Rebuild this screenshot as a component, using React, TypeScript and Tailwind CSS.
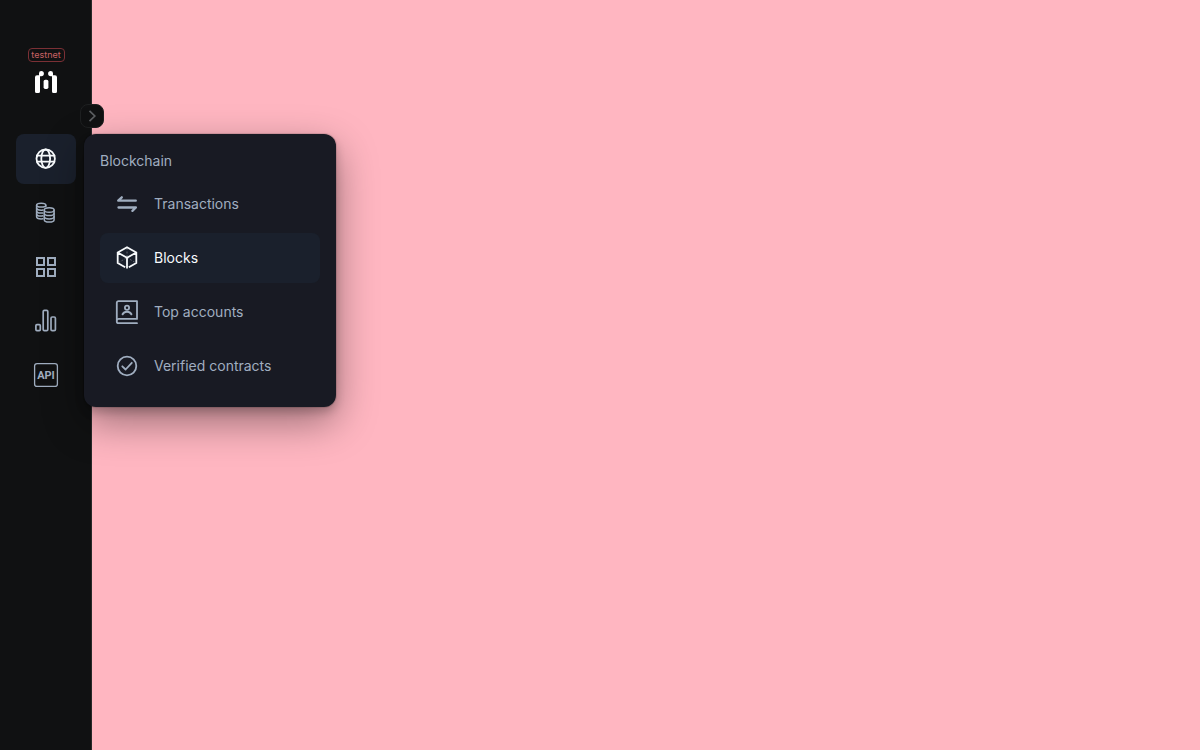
import type { ReactNode } from 'react';

function Icon({ children }: { children: ReactNode }) {
  return (
    <svg
      viewBox="0 0 30 30"
      className="size-[30px] shrink-0"
      fill="none"
      stroke="currentColor"
      strokeWidth="1.8"
      strokeLinecap="round"
      strokeLinejoin="round"
      aria-hidden="true"
    >
      {children}
    </svg>
  );
}

const GlobeIcon = () => (
  <Icon>
    <circle cx="14.7" cy="14.7" r="9.2" />
    <ellipse cx="14.7" cy="14.7" rx="4.4" ry="9.2" />
    <path d="M6 11.7h17.4M6 17.7h17.4" />
  </Icon>
);

const CoinsIcon = () => (
  <Icon>
    <g strokeWidth="1.5">
      <ellipse cx="10.2" cy="7.2" rx="4.6" ry="1.9" />
      <path d="M5.6 7.2v11.6c0 1.2 2 2.1 4.6 2.1.6 0 1.2 0 1.7-.1M14.8 7.2v1.2" />
      <path d="M5.6 10.1c0 1.1 2 2.1 4.6 2.1.6 0 1.2-.1 1.7-.2M5.6 13c0 1.1 2 2.1 4.6 2.1.6 0 1.2-.1 1.7-.2M5.6 15.9c0 1.1 2 2.1 4.6 2.1.6 0 1.2-.1 1.7-.2" />
      <ellipse cx="18.2" cy="12" rx="4.9" ry="2.3" />
      <path d="M13.3 12v9.7c0 1.3 2.2 2.4 4.9 2.4s4.9-1.1 4.9-2.4V12" />
      <path d="M13.3 15.2c0 1.3 2.2 2.4 4.9 2.4s4.9-1.1 4.9-2.4M13.3 18.5c0 1.3 2.2 2.4 4.9 2.4s4.9-1.1 4.9-2.4" />
    </g>
  </Icon>
);

const AppsIcon = () => (
  <Icon>
    <g strokeWidth="2" strokeLinejoin="miter">
      <rect x="6" y="6" width="7" height="7" />
      <rect x="17" y="6" width="7" height="7" />
      <rect x="6" y="17" width="7" height="7" />
      <rect x="17" y="17" width="7" height="7" />
    </g>
  </Icon>
);

const StatsIcon = () => (
  <Icon>
    <g strokeWidth="1.7">
      <rect x="4.9" y="18.7" width="4.4" height="5.9" rx="1" />
      <rect x="12.2" y="4.3" width="4.6" height="20.3" rx="1.2" />
      <rect x="20" y="11" width="4.4" height="13.6" rx="1.2" />
    </g>
  </Icon>
);

const ApiIcon = () => (
  <Icon>
    <rect x="3.6" y="3.6" width="22.8" height="22.8" rx="2.5" strokeWidth="1.3" />
    <text
      x="15"
      y="19"
      textAnchor="middle"
      fill="currentColor"
      stroke="none"
      className="font-['Roboto',sans-serif] text-[11px] font-bold"
    >
      API
    </text>
  </Icon>
);

const TransactionsIcon = () => (
  <Icon>
    <path strokeWidth="2.3" d="M23.8 11.7H6.2l3.6-3.4M6.5 18.5h17.4l-3.5 3.4" />
  </Icon>
);

const BlockIcon = () => (
  <Icon>
    <g strokeLinecap="butt">
      <path
        strokeLinejoin="miter"
        d="M13.2 24.3 5.7 20V9.5L15 4.2l9.3 5.3V20l-7.5 4.3M5.7 9.5 15 14.8l9.3-5.3M15 14.8v10.8"
      />
      <path strokeWidth="1" strokeDasharray="2 1.5" opacity=".3" d="M15 5v9.5L6 20M15 14.5l9 5.5" />
    </g>
  </Icon>
);

const AccountsIcon = () => (
  <Icon>
    <path d="M25 26.2H6.500A1.700 1.700 0 0 1 4.800 24.500V5.800A1.700 1.700 0 0 1 6.500 4.100H25v17.800H6.800a2 2 0 0 0-2 2" />
    <circle cx="15" cy="10.8" r="2.1" />
    <path strokeWidth="2" d="M10.6 17.3c1-2 2.600-2.600 4.400-2.600s3.400.6 4.400 2.600" />
  </Icon>
);

const VerifiedIcon = () => (
  <Icon>
    <circle cx="15" cy="15" r="9.3" />
    <path d="m10.3 15.3 3.300 3.200 6.200-6.700" />
  </Icon>
);

const sections = [
  { label: 'Blockchain', icon: <GlobeIcon />, active: true },
  { label: 'Tokens', icon: <CoinsIcon />, active: false },
  { label: 'Apps', icon: <AppsIcon />, active: false },
  { label: 'Charts and stats', icon: <StatsIcon />, active: false },
  { label: 'API documentation', icon: <ApiIcon />, active: false },
];

const links = [
  { label: 'Transactions', icon: <TransactionsIcon />, active: false },
  { label: 'Blocks', icon: <BlockIcon />, active: true },
  { label: 'Top accounts', icon: <AccountsIcon />, active: false },
  { label: 'Verified contracts', icon: <VerifiedIcon />, active: false },
];

function BlockchainMenu() {
  return (
    <div className="absolute top-0 left-[68px] z-20 w-[252px] rounded-xl bg-[#181a23] p-4 shadow-[0_0_0_1px_rgba(0,0,0,0.1),0_5px_10px_rgba(0,0,0,0.2),0_15px_40px_rgba(0,0,0,0.4)]">
      <h2 className="mb-2 text-sm leading-[21px] text-[#a0aec0]">Blockchain</h2>
      <ul className="flex flex-col gap-1">
        {links.map((link) => (
          <li key={link.label}>
            <a
              href="#"
              aria-current={link.active ? 'page' : undefined}
              className={
                link.active
                  ? 'flex items-center gap-3 rounded-lg bg-[#1a202c] px-3 py-[10px] text-sm text-[#f7fafc]'
                  : 'flex items-center gap-3 rounded-lg px-3 py-[10px] text-sm text-[#a0aec0]'
              }
            >
              {link.icon}
              {link.label}
            </a>
          </li>
        ))}
      </ul>
    </div>
  );
}

export default function App() {
  return (
    <div className="flex min-h-screen bg-[#ffb6c1] font-['Inter',sans-serif]">
      <aside className="relative flex w-[92px] flex-col border-r border-[#28292a] bg-[#101112] pt-12 pr-[15px] pl-4">
        <div className="flex flex-col items-center">
          <span className="flex h-[14px] w-[37px] items-center justify-center rounded border border-[#7b3035] text-[9px] text-[#c96264]">
            testnet
          </span>
          <a href="#" aria-label="Home" className="mt-[9px] block">
            <svg viewBox="0 0 22 22" className="size-[22px]" fill="white" aria-hidden="true">
              <path d="M6.300 0A2.300 2.300 0 0 0 4 2.300V4.300H2A2 2 0 0 0 0 6.300V20.500A1.500 1.500 0 0 0 1.500 22h2A1.500 1.500 0 0 0 5 20.500V5.200H6.300A2.600 2.600 0 0 0 6.300 0Z" />
              <path d="M15.700 0A2.300 2.300 0 0 1 18 2.300V4.300h2A2 2 0 0 1 22 6.300V20.500A1.500 1.500 0 0 1 20.500 22h-2A1.500 1.500 0 0 1 17 20.500V5.200H15.700A2.600 2.600 0 0 1 15.700 0Z" />
              <rect x="8.6" y="8.8" width="4.8" height="9.2" rx="1.7" />
            </svg>
          </a>
        </div>
        <button
          type="button"
          aria-label="Expand menu"
          className="absolute top-[104px] -right-[13px] z-10 flex size-6 items-center justify-center rounded-lg border border-[#1e2021] bg-[#101112] text-[#5c5f62]"
        >
          <svg viewBox="0 0 24 24" className="size-6 shrink-0" fill="none" stroke="currentColor" strokeWidth="1.7" aria-hidden="true">
            <path d="m9.500 6.800 5.300 5.200-5.300 5.200" />
          </svg>
        </button>
        <nav aria-label="Main" className="relative mt-[41px]">
          <ul className="flex flex-col gap-1">
            {sections.map((section) => (
              <li key={section.label}>
                <a
                  href="#"
                  aria-label={section.label}
                  className={
                    section.active
                      ? 'flex justify-center rounded-lg bg-[#1a202c] py-[10px] text-[#f7fafc]'
                      : 'flex justify-center rounded-lg py-[10px] text-[#a0aec0]'
                  }
                >
                  {section.icon}
                </a>
              </li>
            ))}
          </ul>
          <BlockchainMenu />
        </nav>
      </aside>
      <main className="flex-1" />
    </div>
  );
}
